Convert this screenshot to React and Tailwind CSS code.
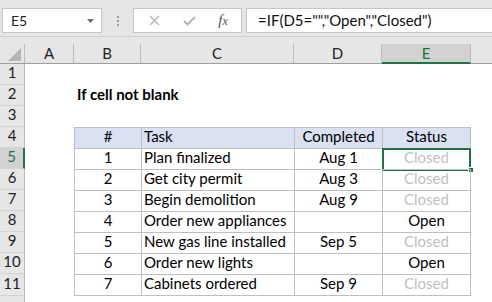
import React from "react";

const font = { fontFamily: "Lato, 'Open Sans', sans-serif" };

const rows = [
  { n: "1", task: "Plan finalized", done: "Aug 1", status: "Closed" },
  { n: "2", task: "Get city permit", done: "Aug 3", status: "Closed" },
  { n: "3", task: "Begin demolition", done: "Aug 9", status: "Closed" },
  { n: "4", task: "Order new appliances", done: "", status: "Open" },
  { n: "5", task: "New gas line installed", done: "Sep 5", status: "Closed" },
  { n: "6", task: "Order new lights", done: "", status: "Open" },
  { n: "7", task: "Cabinets ordered", done: "Sep 9", status: "Closed" },
];

function RowHead({ n, selected }) {
  return (
    <div
      className={
        "w-[25px] shrink-0 h-full flex items-end justify-center pb-[1px] text-[15px] border-b border-[#d4d4d4] " +
        (selected
          ? "bg-[#d2d2d2] text-[#217346] border-r-2 border-r-[#217346]"
          : "bg-[#e6e6e6] text-[#222] border-r border-r-[#bcbcbc]")
      }
    >
      {n}
    </div>
  );
}

function EmptyRow({ n, children }) {
  return (
    <div className="flex h-[21px]">
      <RowHead n={n} />
      <div className="flex-1 relative">{children}</div>
    </div>
  );
}

export default function App() {
  return (
    <div className="w-[492px] h-[302px] overflow-hidden bg-white text-black" style={font}>
      {/* toolbar */}
      <div className="h-[37px] bg-[#e6e6e6] border-b border-[#d0d0d0] flex items-start pt-[8px]">
        <div className="ml-[2px] w-[100px] h-[25px] bg-white border border-[#c6c6c6] flex items-center justify-between pl-[8px] pr-[7px] text-[14px] text-[#222]">
          <span>E5</span>
          <svg width="7" height="4" viewBox="0 0 7 4">
            <path d="M0 0 H7 L3.5 4 Z" fill="#6b6b6b" />
          </svg>
        </div>
        <div className="w-[31px] h-[25px] flex flex-col items-center justify-center gap-[2px]">
          <div className="w-[2px] h-[2px] bg-[#9a9a9a]" />
          <div className="w-[2px] h-[2px] bg-[#9a9a9a]" />
          <div className="w-[2px] h-[2px] bg-[#9a9a9a]" />
        </div>
        <div className="w-[109px] h-[25px] bg-white border border-[#c6c6c6] flex items-center">
          <div className="w-[38px] flex justify-center pl-[2px]">
            <svg width="11" height="11" viewBox="0 0 11 11">
              <path d="M1 1 L10 10 M10 1 L1 10" stroke="#b4b4b4" strokeWidth="1.3" />
            </svg>
          </div>
          <div className="w-[34px] flex justify-center">
            <svg width="13" height="10" viewBox="0 0 13 10">
              <path d="M1 5 L4.5 8.5 L12 1" stroke="#b4b4b4" strokeWidth="2" fill="none" />
            </svg>
          </div>
          <div
            className="w-[34px] flex justify-center text-[15px] italic text-[#555]"
            style={{ fontFamily: "'Liberation Serif', serif" }}
          >
            <span>f</span>
            <span className="text-[12px] mt-[3px]">x</span>
          </div>
        </div>
        <div className="ml-[4px] flex-1 h-[25px] bg-white border-y border-l border-[#c6c6c6] flex items-center pl-[11px] text-[15px] text-[#111]">
          =IF(D5="","Open","Closed")
        </div>
      </div>

      {/* column header */}
      <div className="h-[7px] bg-[#e6e6e6]" />
      <div className="flex h-[20px] bg-[#e6e6e6] border-b border-[#9f9f9f] text-[15px] text-[#222]">
        <div className="w-[25px] border-r border-[#bcbcbc] flex items-end justify-end pb-[2px] pr-[3px]">
          <svg width="13" height="13" viewBox="0 0 13 13">
            <path d="M13 0 V13 H0 Z" fill="#b6b6b6" />
          </svg>
        </div>
        <div className="w-[49px] border-r border-[#bcbcbc] flex items-center justify-center">A</div>
        <div className="w-[67px] border-r border-[#bcbcbc] flex items-center justify-center">B</div>
        <div className="w-[153px] border-r border-[#bcbcbc] flex items-center justify-center">C</div>
        <div className="w-[88px] border-r border-[#bcbcbc] flex items-center justify-center">D</div>
        <div className="w-[89px] bg-[#d2d2d2] border-r border-[#bcbcbc] border-b-2 border-b-[#217346] -mb-[1px] flex items-center justify-center text-[#217346]">
          E
        </div>
        <div className="flex-1" />
      </div>

      {/* rows */}
      <EmptyRow n="1" />
      <EmptyRow n="2">
        <div className="absolute left-[52px] bottom-[1px] text-[15px] font-bold">If cell not blank</div>
      </EmptyRow>
      <EmptyRow n="3" />

      {/* table header row 4 */}
      <div className="flex h-[21px] text-[15px]">
        <RowHead n="4" />
        <div className="w-[49px] shrink-0" />
        <div className="w-[67px] shrink-0 bg-[#d9e1f2] border-l border-t border-[#bfbfbf] flex items-end justify-center pb-[1px]">#</div>
        <div className="w-[153px] shrink-0 bg-[#d9e1f2] border-l border-t border-[#bfbfbf] flex items-end pl-[2px] pb-[1px]">Task</div>
        <div className="w-[88px] shrink-0 bg-[#d9e1f2] border-l border-t border-[#bfbfbf] flex items-end justify-center pb-[1px]">Completed</div>
        <div className="w-[89px] shrink-0 bg-[#d9e1f2] border-x border-t border-[#bfbfbf] flex items-end justify-center pb-[1px]">Status</div>
      </div>

      {rows.map((r, i) => {
        const sel = i === 0;
        const last = i === rows.length - 1;
        const b = "border-[#bfbfbf] " + (last ? "border-b " : "");
        return (
          <div key={r.n} className={"flex text-[15px] " + (last ? "h-[22px]" : "h-[21px]")}>
            <RowHead n={String(i + 5)} selected={sel} />
            <div className="w-[49px] shrink-0" />
            <div className={"w-[67px] shrink-0 border-l border-t flex items-end justify-center pb-[1px] " + b}>{r.n}</div>
            <div className={"w-[153px] shrink-0 border-l border-t flex items-end pl-[2px] pb-[1px] whitespace-nowrap " + b}>{r.task}</div>
            <div className={"w-[88px] shrink-0 border-l border-t flex items-end justify-center pb-[1px] " + b}>{r.done}</div>
            <div
              className={
                "w-[89px] shrink-0 border-x border-t flex items-end justify-center pb-[1px] relative " +
                b +
                (r.status === "Closed" ? "text-[#bfbfbf]" : "text-black")
              }
            >
              {r.status}
              {sel && (
                <>
                  <div className="absolute -left-[1px] -top-[1px] w-[89px] h-[23px] border-2 border-[#217346]" />
                  <div className="absolute -right-[4px] -bottom-[4px] w-[6px] h-[6px] bg-[#217346] border border-white" />
                </>
              )}
            </div>
          </div>
        );
      })}
      <EmptyRow n="" />
    </div>
  );
}
